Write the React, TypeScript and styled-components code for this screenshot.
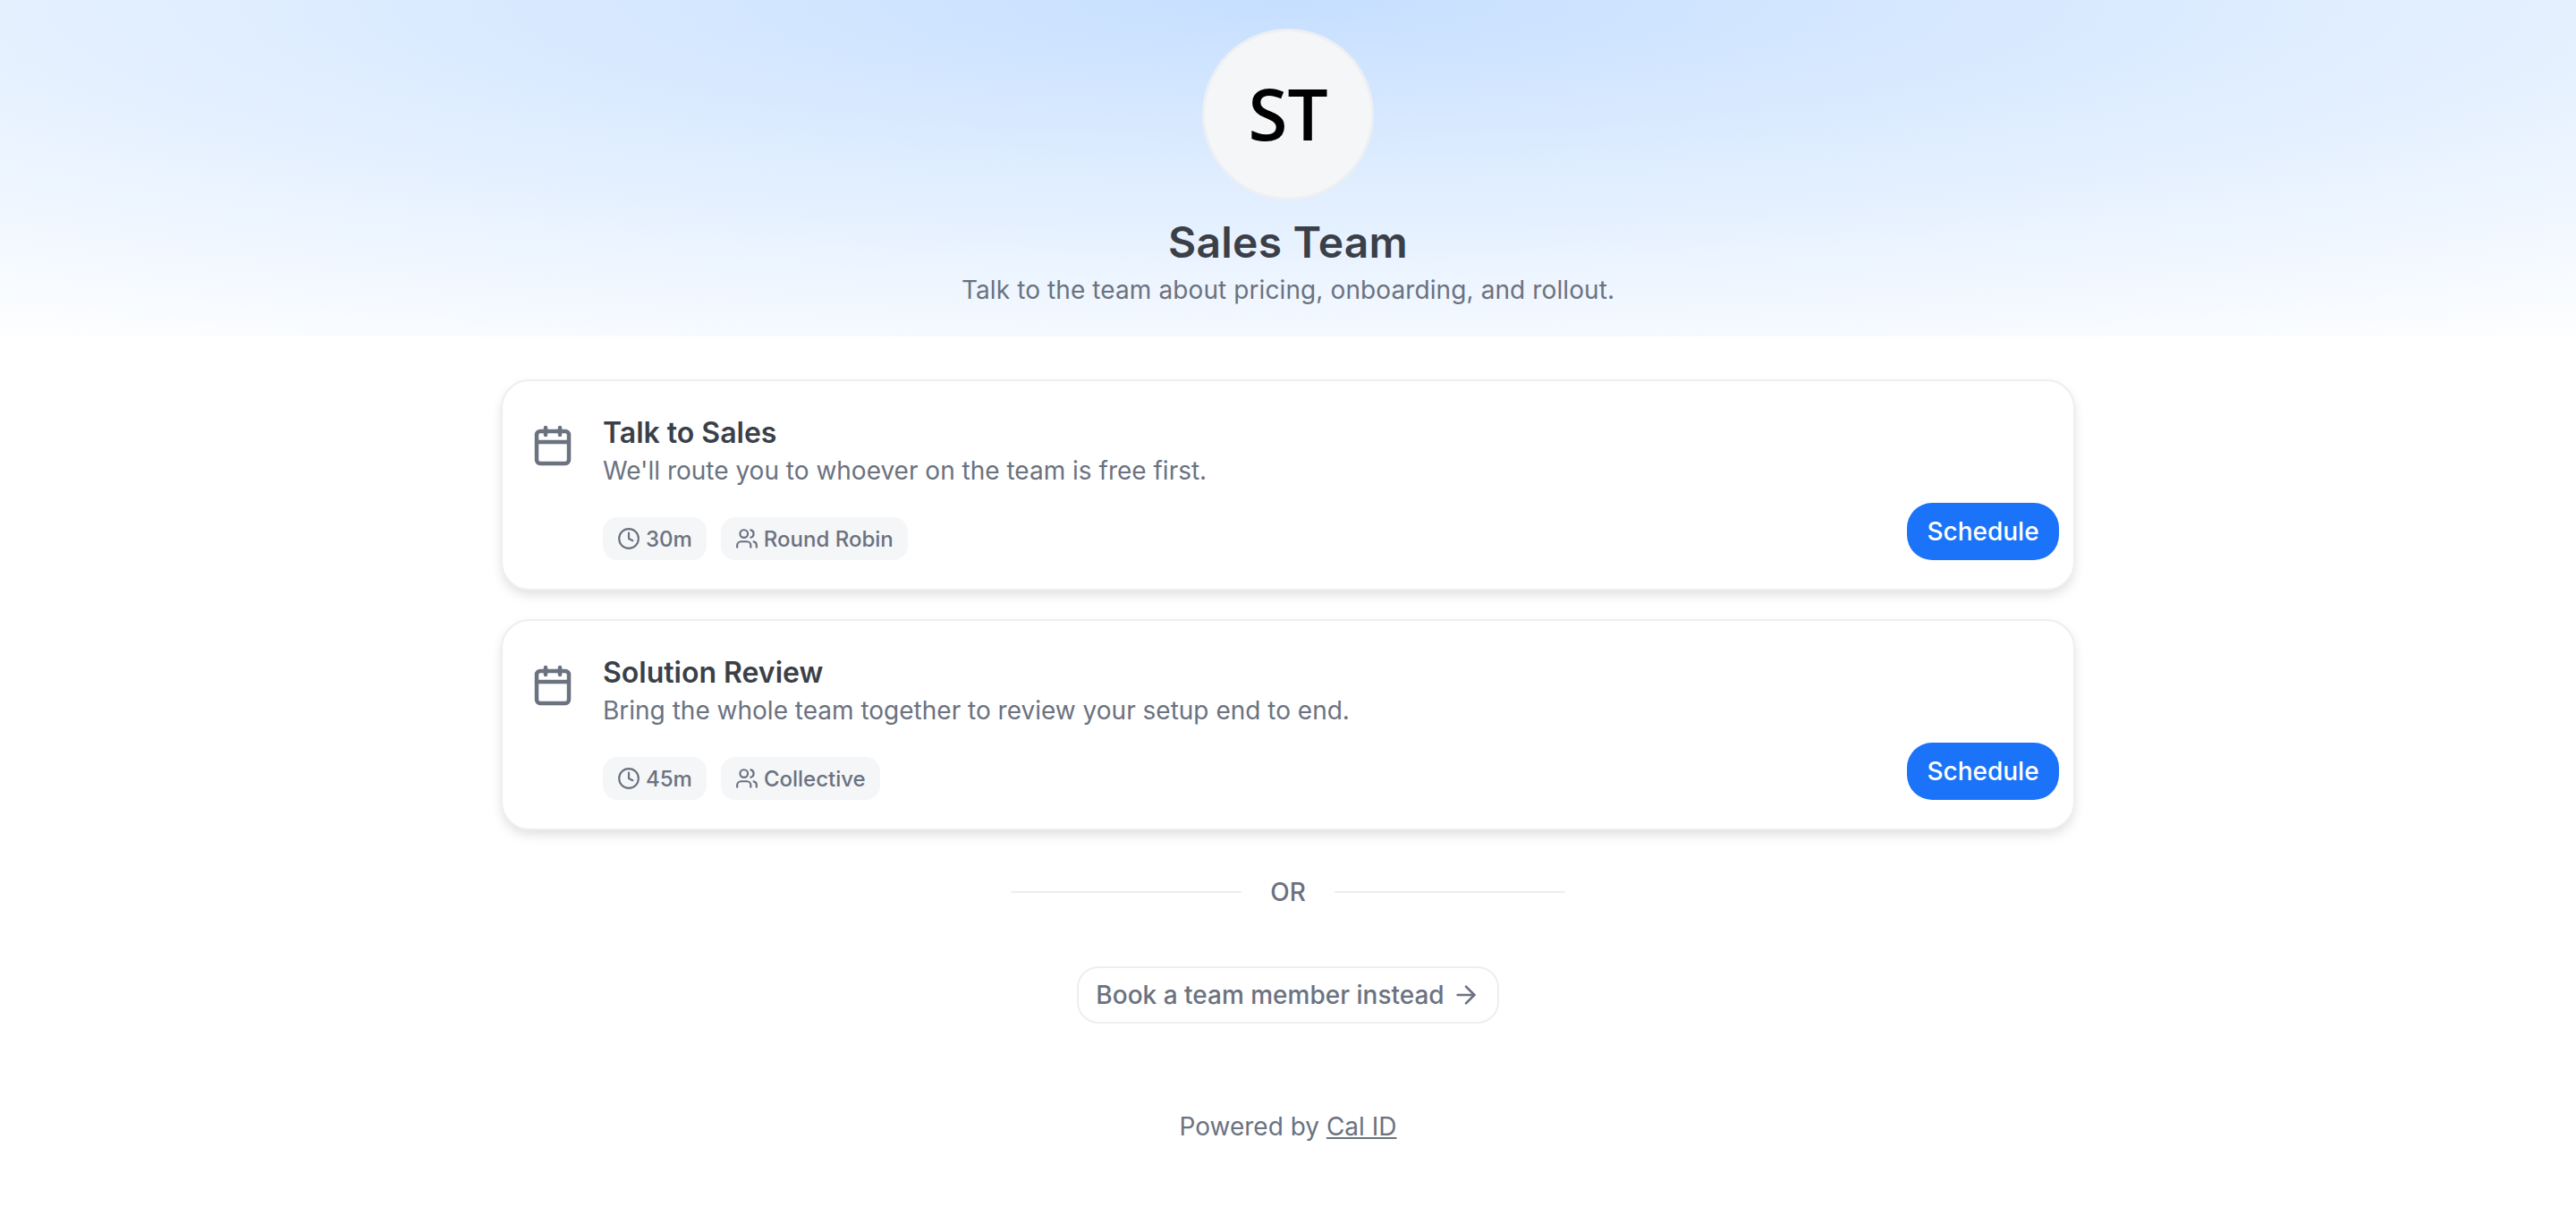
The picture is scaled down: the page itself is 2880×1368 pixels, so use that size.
import { FC } from "react";
import styled, { createGlobalStyle } from "styled-components";
import { ArrowRight, Calendar, Clock, Users } from "lucide-react";

interface EventType {
  title: string;
  description: string;
  duration: string;
  kind: string;
}

const events: EventType[] = [
  {
    title: "Talk to Sales",
    description: "We'll route you to whoever on the team is free first.",
    duration: "30m",
    kind: "Round Robin",
  },
  {
    title: "Solution Review",
    description: "Bring the whole team together to review your setup end to end.",
    duration: "45m",
    kind: "Collective",
  },
];

const EventCard: FC<{ event: EventType }> = ({ event }) => {
  return (
    <Card>
      <CardIcon>
        <Calendar size={48} strokeWidth={2.25} />
      </CardIcon>
      <CardBody>
        <CardTitle>{event.title}</CardTitle>
        <CardText>{event.description}</CardText>
        <Chips>
          <Chip>
            <Clock size={26} strokeWidth={2} />
            {event.duration}
          </Chip>
          <Chip>
            <Users size={26} strokeWidth={2} />
            {event.kind}
          </Chip>
        </Chips>
      </CardBody>
      <ScheduleButton>Schedule</ScheduleButton>
    </Card>
  );
};

export default function App() {
  return (
    <>
      <GlobalStyle />
      <Hero>
        <Avatar>ST</Avatar>
        <TeamName>Sales Team</TeamName>
        <TeamBio>Talk to the team about pricing, onboarding, and rollout.</TeamBio>
      </Hero>
      <Main>
        <CardList>
          {events.map((event) => (
            <EventCard key={event.title} event={event} />
          ))}
        </CardList>
        <Divider>
          <Line />
          <DividerLabel>OR</DividerLabel>
          <Line />
        </Divider>
        <MemberLink>
          Book a team member instead
          <ArrowRight size={32} strokeWidth={2} />
        </MemberLink>
        <Footer>
          Powered by <FooterLink>Cal ID</FooterLink>
        </Footer>
      </Main>
    </>
  );
}

const GlobalStyle = createGlobalStyle`
  html, body {
    margin: 0;
    background: #fff;
    font-family: Inter, "Liberation Sans", sans-serif;
  }
  * {
    box-sizing: border-box;
  }
`;

const Hero = styled.header`
  height: 376px;
  padding-top: 32px;
  display: flex;
  flex-direction: column;
  align-items: center;
  background: radial-gradient(ellipse 2650px 460px at 50% 0, #c6dfff 0%, #ffffff 100%);
`;

const Avatar = styled.div`
  width: 192px;
  height: 192px;
  padding-bottom: 6px;
  border-radius: 50%;
  background: #f5f6f8;
  border: 3px solid #edeff2;
  display: flex;
  align-items: center;
  justify-content: center;
  font-family: "Open Sans", sans-serif;
  font-size: 80px;
  font-weight: 600;
  color: #000;
`;

const TeamName = styled.h1`
  margin: 19px 0 0;
  font-size: 48px;
  letter-spacing: 0.2px;
  line-height: 56px;
  font-weight: 600;
  color: #3b3f48;
`;

const TeamBio = styled.p`
  margin: 5px 0 0;
  font-size: 28px;
  letter-spacing: 0.1px;
  line-height: 40px;
  color: #6b7280;
`;

const Main = styled.main`
  width: 1760px;
  margin: 0 auto;
  padding-top: 48px;
  display: flex;
  flex-direction: column;
  align-items: center;
`;

const CardList = styled.div`
  width: 100%;
  display: flex;
  flex-direction: column;
  gap: 32px;
`;

const Card = styled.article`
  height: 236px;
  padding: 38px 16px 32px 32px;
  display: flex;
  background: #fff;
  border: 2px solid #ebeff4;
  border-radius: 32px;
  box-shadow: 0 6px 14px -2px rgba(0, 0, 0, 0.14);
`;

const CardIcon = styled.div`
  width: 48px;
  height: 48px;
  margin-top: 10px;
  margin-right: 32px;
  color: #6b7280;
`;

const CardBody = styled.div`
  flex: 1;
`;

const CardTitle = styled.h2`
  margin: 0;
  font-size: 32px;
  line-height: 40px;
  font-weight: 600;
  color: #3b3f48;
`;

const CardText = styled.p`
  margin: 0;
  font-size: 28px;
  line-height: 44px;
  color: #6b7280;
`;

const Chips = styled.div`
  margin-top: 30px;
  display: flex;
  gap: 16px;
`;

const Chip = styled.span`
  height: 48px;
  padding: 0 16px;
  display: inline-flex;
  align-items: center;
  gap: 6px;
  background: #f5f6f8;
  border-radius: 16px;
  font-size: 24px;
  font-weight: 500;
  color: #6b7280;
`;

const ScheduleButton = styled.button`
  align-self: flex-end;
  width: 170px;
  height: 64px;
  padding: 0;
  border: 0;
  border-radius: 28px;
  background: #1a73f8;
  color: #fff;
  font-family: inherit;
  font-size: 28px;
  font-weight: 500;
`;

const Divider = styled.div`
  margin-top: 49px;
  display: flex;
  align-items: center;
  gap: 32px;
`;

const Line = styled.span`
  width: 258px;
  height: 2px;
  background: #eceef1;
`;

const DividerLabel = styled.span`
  font-size: 28px;
  line-height: 40px;
  font-weight: 500;
  color: #6b7280;
`;

const MemberLink = styled.a`
  margin-top: 63px;
  width: 472px;
  height: 64px;
  display: flex;
  align-items: center;
  justify-content: center;
  gap: 8px;
  border: 2px solid #eceef1;
  border-radius: 24px;
  font-size: 28px;
  font-weight: 500;
  color: #6b7280;
`;

const Footer = styled.footer`
  margin-top: 93px;
  font-size: 28px;
  line-height: 44px;
  color: #6b7280;
`;

const FooterLink = styled.a`
  text-decoration: underline;
`;
